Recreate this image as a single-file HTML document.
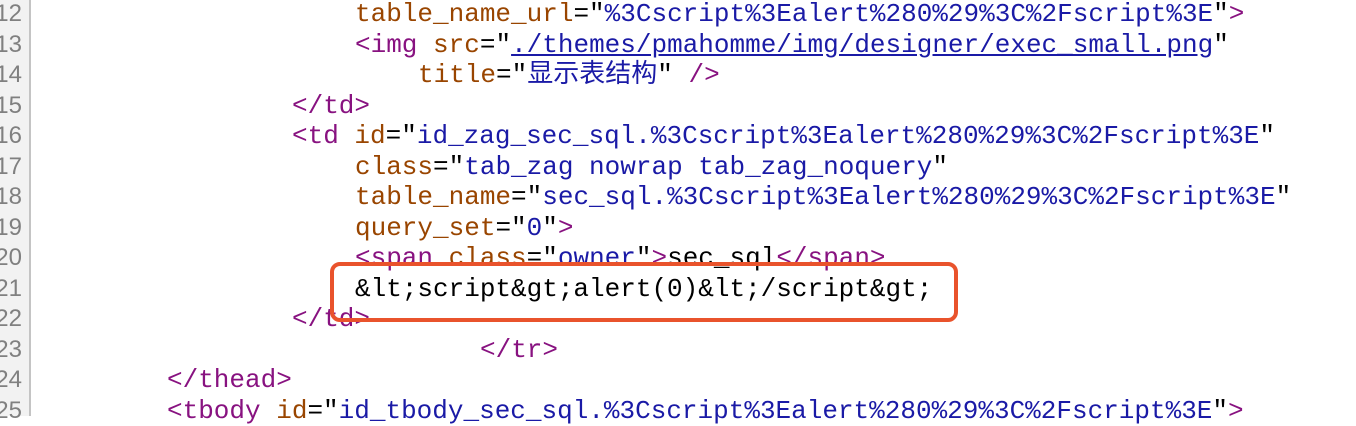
<!DOCTYPE html>
<html><head><meta charset="utf-8"><style>
body{margin:0;width:1356px;height:416px;overflow:hidden;background:#fff;position:relative}
.g{position:absolute;left:0;top:0;width:29px;height:416px;background:#f2f2f2;border-right:2px solid #c4c4c4}
.n{position:absolute;right:1334px;font:24px "Liberation Sans",sans-serif;color:#808080;line-height:30.5px;text-align:right;white-space:nowrap}
.l{position:absolute;font:26px "Liberation Mono","Noto Sans CJK SC",monospace;line-height:30.5px;white-space:pre;color:#000}
.t{color:#881280}.a{color:#994500}.v{color:#1a1aa6}.u{color:#1a1aa6;text-decoration:underline}
.box{position:absolute;left:330px;top:262px;width:620px;height:52px;border:4px solid #e9532c;border-radius:10px}
</style></head><body>
<div class="g"></div>
<div class="n" style="top:-1px">12</div>
<div class="n" style="top:29.5px">13</div>
<div class="n" style="top:60px">14</div>
<div class="n" style="top:90.5px">15</div>
<div class="n" style="top:121px">16</div>
<div class="n" style="top:151.5px">17</div>
<div class="n" style="top:182px">18</div>
<div class="n" style="top:212.5px">19</div>
<div class="n" style="top:243px">20</div>
<div class="n" style="top:273.5px">21</div>
<div class="n" style="top:304px">22</div>
<div class="n" style="top:334.5px">23</div>
<div class="n" style="top:365px">24</div>
<div class="n" style="top:395.5px">25</div>

<div class="l" style="left:355px;top:-1px"><span class="a">table_name_url</span>="<span class="v">%3Cscript%3Ealert%280%29%3C%2Fscript%3E</span>"<span class="t">&gt;</span></div>
<div class="l" style="left:355px;top:29.5px"><span class="t">&lt;img</span> <span class="a">src</span>="<span class="u">./themes/pmahomme/img/designer/exec_small.png</span>"</div>
<div class="l" style="left:418px;top:60px"><span class="a">title</span>="<span class="v">显示表结构</span>" <span class="t">/&gt;</span></div>
<div class="l" style="left:292px;top:90.5px"><span class="t">&lt;/td&gt;</span></div>
<div class="l" style="left:292px;top:121px"><span class="t">&lt;td</span> <span class="a">id</span>="<span class="v">id_zag_sec_sql.%3Cscript%3Ealert%280%29%3C%2Fscript%3E</span>"</div>
<div class="l" style="left:355px;top:151.5px"><span class="a">class</span>="<span class="v">tab_zag nowrap tab_zag_noquery</span>"</div>
<div class="l" style="left:355px;top:182px"><span class="a">table_name</span>="<span class="v">sec_sql.%3Cscript%3Ealert%280%29%3C%2Fscript%3E</span>"</div>
<div class="l" style="left:355px;top:212.5px"><span class="a">query_set</span>="<span class="v">0</span>"<span class="t">&gt;</span></div>
<div class="l" style="left:355px;top:243px"><span class="t">&lt;span</span> <span class="a">class</span>="<span class="v">owner</span>"<span class="t">&gt;</span>sec_sql<span class="t">&lt;/span&gt;</span></div>
<div class="l" style="left:355px;top:273.5px">&amp;lt;script&amp;gt;alert(0)&amp;lt;/script&amp;gt;</div>
<div class="l" style="left:292px;top:304px"><span class="t">&lt;/td&gt;</span></div>
<div class="l" style="left:480px;top:334.5px"><span class="t">&lt;/tr&gt;</span></div>
<div class="l" style="left:167px;top:365px"><span class="t">&lt;/thead&gt;</span></div>
<div class="l" style="left:167px;top:395.5px"><span class="t">&lt;tbody</span> <span class="a">id</span>="<span class="v">id_tbody_sec_sql.%3Cscript%3Ealert%280%29%3C%2Fscript%3E</span>"<span class="t">&gt;</span></div>
<div class="box"></div>
</body></html>
